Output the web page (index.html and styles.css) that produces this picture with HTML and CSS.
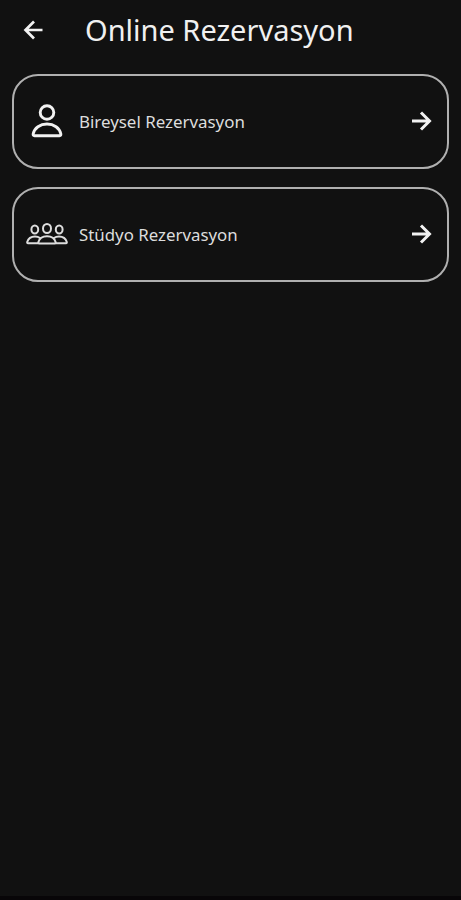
FILE: index.html
```html
<!DOCTYPE html>
<html lang="tr">
<head>
<meta charset="utf-8">
<title>Online Rezervasyon</title>
<link rel="stylesheet" href="styles.css">
</head>
<body>
<header class="topbar">
  <svg class="back" viewBox="0 0 20 20"><path d="M19.500 10H3M11 1.500L2.500 10l8.500 8.500"/></svg>
  <h1 class="title">Online Rezervasyon</h1>
</header>
<main class="options">
  <a class="card">
    <span class="icon"><svg class="person" width="32" height="34" viewBox="0 0 32 34"><circle cx="16" cy="8.500" r="6.800"/><path d="M3.500 31.700Q1.800 31.700 2.200 29.700C3.500 24 9 20 16 20S28.500 24 29.800 29.700Q30.200 31.700 28.500 31.700Z"/></svg></span>
    <span class="label">Bireysel Rezervasyon</span>
    <svg class="go" viewBox="0 0 20 20"><path d="M0 10h17.500M9 1.500l8.500 8.500-8.500 8.500"/></svg>
  </a>
  <a class="card">
    <span class="icon"><svg class="group" width="42" height="24" viewBox="0 0 42 24"><ellipse cx="21" cy="6.500" rx="4" ry="4.600"/><ellipse cx="8.800" cy="7.500" rx="3.400" ry="4"/><ellipse cx="33.200" cy="7.500" rx="3.400" ry="4"/><path d="M13 21.500Q12 21.500 12.300 20.300C13.300 16.500 16.500 14.200 21 14.200S28.700 16.500 29.700 20.300Q30 21.500 29 21.500ZM12 21.200H2Q1 21.200 1.200 20C2.200 16.700 5 14.500 9 14.500q3 0 5 1.500M30 21.200h10Q41 21.200 40.800 20C39.800 16.700 37 14.500 33 14.500q-3 0-5 1.500"/></svg></span>
    <span class="label studio">Stüdyo Rezervasyon</span>
    <svg class="go" viewBox="0 0 20 20"><path d="M0 10h17.500M9 1.500l8.500 8.500-8.500 8.500"/></svg>
  </a>
</main>
</body>
</html>
```
FILE: styles.css
```css
* { box-sizing: border-box; }
body { margin: 0; min-height: 900px; background: #111; color: #f0f0f0; font-family: "Noto Sans", sans-serif; border-bottom: 4px solid #080608; }
svg { fill: none; stroke: #f2f2f2; stroke-width: 2.7; flex: none; }
.topbar { display: flex; align-items: center; height: 60px; padding-left: 23px; }
.back { width: 20px; height: 20px; margin-bottom: 1px; }
.title { margin: 0 0 0 42px; font-size: 29px; font-weight: 400; line-height: 40px; white-space: nowrap; }
.options { display: flex; flex-direction: column; gap: 18px; padding: 14px 12px 0; }
.card { display: flex; align-items: center; height: 95px; padding: 0 15px 0 11px; border: 2px solid #b0b0b0; border-radius: 26px; }
.icon { display: flex; justify-content: center; width: 44px; padding-bottom: 2px; }
.person { stroke-width: 2.9; }
.group { stroke-width: 2; stroke: #ddd; }
.label { flex: 1; margin: 0 0 1px 10px; font-size: 16.9px; color: #ddd; white-space: nowrap; }
.studio { font-size: 16.85px; }
.go { width: 20px; height: 20px; margin-bottom: 1px; stroke-width: 3; }
```
